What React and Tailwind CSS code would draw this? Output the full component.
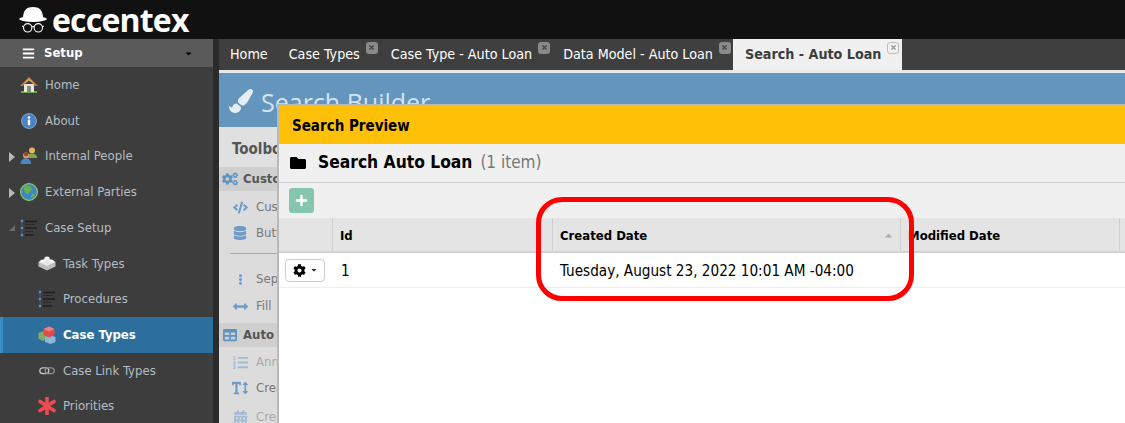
import { FaBars, FaCaretDown, FaCaretUp, FaPaintBrush, FaCogs, FaCode, FaDatabase, FaEllipsisV, FaArrowsAltH, FaTable, FaListOl, FaTextHeight, FaCalendarAlt, FaFolder, FaPlus, FaCog, FaTimes } from "react-icons/fa";

const FONT = "font-['DejaVu_Sans_Condensed','DejaVu_Sans',sans-serif]";

function HatLogo() {
  return (
    <svg width="28" height="32" viewBox="0 0 28 32" fill="none">
      <path d="M4 14 C4 6 8 3 14 3 C20 3 24 6 24 14 Z" fill="#fff" />
      <ellipse cx="14" cy="15" rx="13.8" ry="2.9" fill="#fff" />
      <circle cx="8.7" cy="23.8" r="4.2" stroke="#fff" strokeWidth="1.1" />
      <circle cx="19.3" cy="23.8" r="4.2" stroke="#fff" strokeWidth="1.1" />
      <path d="M12.7 22.8 Q14 21.8 15.3 22.8 M4.5 22.8 L3 22 M23.5 22.8 L25 22" stroke="#fff" strokeWidth="1" />
    </svg>
  );
}

const HomeIcon = () => (
  <svg width="18" height="16" viewBox="0 0 18 16">
    <rect x="1" y="14" width="16" height="2" fill="#6aa84f" />
    <rect x="4" y="7" width="10" height="8" fill="#e9e6df" />
    <rect x="7" y="9" width="4" height="6" fill="#8a8a80" />
    <path d="M0 9 L9 0 L18 9 L15.5 9 L9 3.5 L2.5 9 Z" fill="#c9803f" />
    <path d="M3 7 L9 1.5 L15 7 L9 3.5 Z" fill="#dca066" />
  </svg>
);

const InfoIcon = () => (
  <svg width="16" height="16" viewBox="0 0 16 16">
    <circle cx="8" cy="8" r="7.5" fill="#4a82c3" stroke="#8fb4de" strokeWidth="0.8" />
    <circle cx="8" cy="4.5" r="1.3" fill="#fff" />
    <rect x="6.8" y="6.6" width="2.4" height="5.6" fill="#fff" />
  </svg>
);

const PeopleIcon = () => (
  <svg width="18" height="18" viewBox="0 0 18 18">
    <circle cx="12" cy="3.5" r="3" fill="#e8b560" />
    <path d="M7.5 11 C7.5 7.5 9.5 6.5 12 6.5 C14.5 6.5 17 7.5 17 10.5 L17 11 Z" fill="#7fa84e" />
    <circle cx="6" cy="8.5" r="3" fill="#d99b6a" />
    <circle cx="6" cy="7" r="2.2" fill="#8a4f2c" />
    <path d="M0.5 17 C0.5 13 3 11.5 6 11.5 C9 11.5 11 13 11 17 Z" fill="#4a86c8" />
  </svg>
);

const GlobeIcon = () => (
  <svg width="18" height="18" viewBox="0 0 18 18">
    <circle cx="9" cy="9" r="8.4" fill="#3f86c4" stroke="#8ecb62" strokeWidth="1.2" />
    <path d="M5 3 C8 2 11 3 12 6 C12 8 9 8 9 10 C8 12 6 11 5 9 C4 7 3 5 5 3 Z" fill="#6bb04a" />
    <path d="M12 11 C14 10 15 11 14 13 C13 15 11 15 11 14 Z" fill="#6bb04a" />
  </svg>
);

const ListIcon = () => (
  <svg width="18" height="18" viewBox="0 0 18 18">
    <circle cx="2" cy="2" r="1.3" fill="#5b9be0" />
    <circle cx="2" cy="9" r="1.3" fill="#5b9be0" />
    <circle cx="2" cy="16" r="1.3" fill="#5b9be0" />
    <path d="M2 2 V16" stroke="#4d6f96" strokeWidth="0.7" />
    <path d="M5 2.5 H17 M5 9 H17 M5 16 H14" stroke="#1f1f1f" strokeWidth="1.5" />
    <path d="M5 5.5 H15 M5 12.5 H13" stroke="#2a2a2a" strokeWidth="1" />
  </svg>
);

const BrickIcon = () => (
  <svg width="18" height="16" viewBox="0 0 18 16">
    <path d="M9 3 L17.5 7 V11.5 L9 15.5 L0.5 11.5 V7 Z" fill="#bdbdbd" />
    <path d="M9 3 L17.5 7 L9 11 L0.5 7 Z" fill="#e6e6e6" />
    <ellipse cx="9" cy="3.2" rx="2.8" ry="1.8" fill="#f5f5f5" />
    <ellipse cx="4.7" cy="6" rx="2.6" ry="1.6" fill="#f5f5f5" />
    <ellipse cx="13.3" cy="6" rx="2.6" ry="1.6" fill="#f5f5f5" />
  </svg>
);

const CubesIcon = () => (
  <svg width="18" height="18" viewBox="0 0 18 18">
    <path d="M0.5 7 L5.5 5 L9 7 V13 L5 15 L0.5 12.5 Z" fill="#7cae6a" />
    <path d="M7 11 L12 9 L17.5 11 V16 L12.5 18 L7 16 Z" fill="#8db6dd" />
    <path d="M5.5 3 L11 0.5 L16.5 3 V9 L11 11.5 L5.5 9 Z" fill="#dd4b4b" />
    <path d="M5.5 3 L11 0.5 L16.5 3 L11 5.5 Z" fill="#ef8080" />
  </svg>
);

const LinkIcon = () => (
  <svg width="16" height="9" viewBox="0 0 16 9" fill="none">
    <rect x="0.8" y="1.8" width="9" height="5.8" rx="2.9" stroke="#c4c4c4" strokeWidth="1.3" />
    <rect x="6.2" y="1.8" width="9" height="5.8" rx="2.9" stroke="#8e8e8e" strokeWidth="1.3" />
  </svg>
);

const StarIcon = () => (
  <svg width="18" height="18" viewBox="0 0 18 18">
    <path d="M9 1 V17 M2 4.5 L16 13.5 M16 4.5 L2 13.5" stroke="#ee4b50" strokeWidth="3.6" strokeLinecap="round" />
  </svg>
);

const NAV = [
  { label: "Home", icon: <HomeIcon /> },
  { label: "About", icon: <InfoIcon /> },
  { label: "Internal People", icon: <PeopleIcon />, arrow: "closed" },
  { label: "External Parties", icon: <GlobeIcon />, arrow: "closed" },
  { label: "Case Setup", icon: <ListIcon />, arrow: "open" },
  { label: "Task Types", icon: <BrickIcon />, sub: true },
  { label: "Procedures", icon: <ListIcon />, sub: true },
  { label: "Case Types", icon: <CubesIcon />, sub: true, active: true },
  { label: "Case Link Types", icon: <LinkIcon />, sub: true },
  { label: "Priorities", icon: <StarIcon />, sub: true },
];

function NavRow({ item }) {
  return (
    <div className={`h-[35.7px] flex items-center relative ${item.sub ? "pl-[38px]" : "pl-[20px]"} ${item.active ? "bg-[#2d6f9c] border-l-[3px] border-[#3b8ec4] !pl-[35px]" : ""}`}>
      {item.arrow === "closed" && (
        <span className="absolute left-[9px] top-[14px] w-0 h-0 border-y-[5px] border-y-transparent border-l-[6px] border-l-[#b8b8b8]" />
      )}
      {item.arrow === "open" && (
        <span className="absolute left-[9px] top-[15px] w-0 h-0 border-b-[6px] border-b-[#6a6a6a] border-l-[6px] border-l-transparent" />
      )}
      <span className="w-[18px] flex justify-center shrink-0">{item.icon}</span>
      <span className={`ml-[7px] text-[13px] ${item.active ? "font-bold text-white" : "text-[#b3bdc4]"}`}>{item.label}</span>
    </div>
  );
}

function Tab({ label, closable = true, active = false }) {
  return (
    <div className={`h-full flex items-center ${active ? "bg-[#f0f0f0] pl-3 pr-[3px] font-bold text-[#3d3d3d]" : closable ? "text-white pl-[11px] pr-[2px]" : "text-white pl-[11px] pr-[10px]"}`}>
      <span className="mt-[1px]">{label}</span>
      {closable && (
        <span className={`ml-[6px] mb-[14px] w-3 h-3 rounded-[3px] flex items-center justify-center ${active ? "bg-[#f0f0f0] border border-[#bbb] text-[#999]" : "bg-[#8a8a8a] text-[#444]"}`}>
          <FaTimes size={7} />
        </span>
      )}
    </div>
  );
}

function ToolItem({ icon, label, faded, className = "" }) {
  return (
    <div className={`h-[26px] flex items-center pl-[13px] ${className}`}>
      <span className={`w-[16px] flex justify-center text-[#6d9cc8] ${faded ? "opacity-50" : ""}`}>{icon}</span>
      <span className={`ml-[8px] text-[13px] ${faded ? "text-[#aaa]" : "text-[#777]"}`}>{label}</span>
    </div>
  );
}

function ToolHead({ icon, label, className = "" }) {
  return (
    <div className={`h-[24px] bg-[#cfcfcf] flex items-center pl-[3px] ${className}`}>
      <span className="w-[16px] flex justify-center text-[#5f93c4]">{icon}</span>
      <span className="ml-[5px] text-[13px] font-bold text-[#555]">{label}</span>
    </div>
  );
}

export default function App() {
  return (
    <div className={`w-[1125px] h-[423px] overflow-hidden flex flex-col bg-[#2b2b2b] ${FONT}`}>
      {/* Top bar */}
      <div className="h-[39px] bg-[#111] flex items-center pl-[19px] shrink-0">
        <HatLogo />
        <span className="ml-[5px] text-[32px] leading-[39px] font-bold text-white font-['Open_Sans',sans-serif] tracking-[-0.8px]">eccentex</span>
      </div>

      <div className="flex flex-1 min-h-0">
        {/* Sidebar */}
        <div className="w-[213px] bg-[#3d3d3d] shrink-0">
          <div className="h-[28px] bg-[#5a5a5a] flex items-center pl-[22px] pr-[20px] text-white">
            <FaBars size={13} />
            <span className="ml-[9px] text-[13px] font-bold flex-1">Setup</span>
            <FaCaretDown size={9} className="text-black" />
          </div>
          {NAV.map((item) => (
            <NavRow key={item.label} item={item} />
          ))}
        </div>

        {/* Main */}
        <div className="ml-[6px] flex-1 min-w-0 relative flex flex-col">
          <div className="h-[31px] bg-[#3f3f3f] flex items-center text-[14.2px] shrink-0">
            <Tab label="Home" closable={false} />
            <Tab label="Case Types" />
            <Tab label="Case Type - Auto Loan" />
            <Tab label="Data Model - Auto Loan" />
            <Tab label="Search - Auto Loan" active />
          </div>
          <div className="h-[3px] bg-[#e8e8e8] shrink-0" />
          <div className="h-[54px] bg-[#6495bd] flex items-start pl-[10px] pt-[16px] text-[#d5e3ee] shrink-0">
            <FaPaintBrush size={24} className="text-[#e6eef5]" />
            <span className="ml-[8px] mt-[-2px] text-[25px] leading-[30px] font-['Open_Sans',sans-serif]">Search Builder</span>
          </div>
          <div className="flex-1 bg-[#dcdcdc] overflow-hidden">
            <div className="h-[40px] flex items-center pl-[13px] pt-[5px] text-[15px] font-bold text-[#555] bg-[#e0e0e0]">Toolbox</div>
            <ToolHead icon={<FaCogs size={16} />} label="Custom" />
            <ToolItem icon={<FaCode size={15} />} label="Custom" className="mt-[3px]" />
            <ToolItem icon={<FaDatabase size={14} />} label="Button" />
            <div className="h-[1px] bg-[#aaa] ml-[11px] mt-[7px]" />
            <ToolItem icon={<FaEllipsisV size={11} />} label="Separator" className="mt-[12px]" />
            <ToolItem icon={<FaArrowsAltH size={15} />} label="Fill" className="mt-[1px]" />
            <ToolHead icon={<FaTable size={14} />} label="Auto Loan" className="mt-[4px]" />
            <ToolItem icon={<FaListOl size={15} />} label="Annotation" faded className="mt-[2px]" />
            <ToolItem icon={<FaTextHeight size={16} />} label="Create" />
            <ToolItem icon={<FaCalendarAlt size={15} />} label="Create" faded className="mt-[3px]" />
          </div>

          {/* Search Preview dialog */}
          <div className="absolute left-[58px] top-[65px] w-[860px] h-[330px] bg-white border-2 border-[#b9b9b9] border-r-0 flex flex-col">
            <div className="h-[38px] bg-[#ffc107] flex items-center pl-[13px] pt-[2px] text-[15px] font-bold text-black shrink-0">Search Preview</div>
            <div className="h-[39px] bg-[#f0f0f0] border-b border-[#ccc] flex items-center pl-[11px] shrink-0">
              <FaFolder size={16} className="text-black" />
              <span className="ml-[12px] text-[17.3px] font-bold text-black">Search Auto Loan</span>
              <span className="ml-[8px] text-[17px] text-[#777]">(1 item)</span>
            </div>
            <div className="h-[35px] bg-[#f0f0f0] flex items-center pl-[10px] shrink-0">
              <span className="w-[25px] h-[25px] rounded-[3px] bg-[#85c7ae] flex items-center justify-center text-white">
                <FaPlus size={13} />
              </span>
            </div>
            <div className="h-[35px] bg-[#e4e4e4] border-b-2 border-[#d2d2d2] flex items-center text-[13px] font-bold text-black shrink-0">
              <div className="w-[54px] h-full border-r border-[#cfcfcf]" />
              <div className="w-[220px] pl-[7px] pt-[2px] h-full border-r border-[#cfcfcf] flex items-center">Id</div>
              <div className="w-[348px] pl-[7px] pr-[4px] pt-[2px] h-full border-r border-[#cfcfcf] flex items-center justify-between">
                Created Date
                <FaCaretUp size={11} className="text-[#aaa] mr-[2px]" />
              </div>
              <div className="w-[219px] pl-[7px] pt-[2px] h-full border-r border-[#cfcfcf] flex items-center">Modified Date</div>
            </div>
            <div className="h-[35px] border-b border-[#eee] flex items-center text-[15.15px] text-black shrink-0">
              <div className="w-[55px] pl-[6px]">
                <span className="w-[40px] h-[23px] rounded-[4px] border border-[#ccc] bg-white flex items-center justify-center gap-[4px]">
                  <FaCog size={13} />
                  <FaCaretDown size={8} className="text-[#333]" />
                </span>
              </div>
              <div className="w-[219px] pl-[7px] pt-[2px]">1</div>
              <div className="pl-[7px] pt-[2px]">Tuesday, August 23, 2022 10:01 AM -04:00</div>
            </div>
          </div>

          {/* Red callout */}
          <div className="absolute left-[317px] top-[158px] w-[378px] h-[104px] border-[5px] border-[#ff0000] rounded-[26px]" />
        </div>
      </div>
    </div>
  );
}
